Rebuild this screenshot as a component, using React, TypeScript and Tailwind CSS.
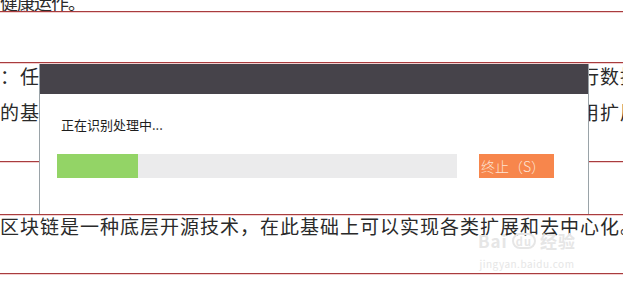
import React from 'react';

const font = { fontFamily: '"Noto Sans CJK SC", "Noto Sans", sans-serif' };

function RedLine() {
  return <div className="h-px bg-[#a83c3e] shadow-[0_1px_0_#f3d0d0]" />;
}

function Watermark() {
  return (
    <div className="absolute left-[478px] top-[232px] flex flex-col items-center text-[#e6e6e6] select-none">
      <div className="flex items-center gap-1 text-[17px] leading-[18px] font-bold tracking-[1px]">
        <span>Bai</span>
        <span className="rounded-full border-2 border-[#e6e6e6] px-[2px] text-[11px] leading-[12px]">du</span>
        <span>经验</span>
      </div>
      <div className="text-[10px] leading-[12px] mt-[8px] tracking-[0.5px]">jingyan.baidu.com</div>
    </div>
  );
}

function ProgressDialog({ progress }: { progress: number }) {
  return (
    <div className="absolute left-[39px] top-[64px] w-[550px] h-[150px] bg-white border-x border-[#9aa3a8] flex flex-col">
      <div className="h-[30px] bg-[#46434a]" />
      <div className="pl-[21px] pt-[21px] text-[13px] leading-[20px] text-[#1e1e1e]">正在识别处理中...</div>
      <div className="flex items-center pl-[17px] mt-[19px]">
        <div className="w-[400px] h-[24px] bg-[#ebebec]">
          <div className="h-full bg-[#93d466]" style={{ width: `${progress}%` }} />
        </div>
        <button className="ml-[22px] w-[75px] h-[24px] bg-[#f7864c] text-[#fde3d3] text-[14px] leading-[24px] text-left pl-[2px] font-light">
          终止（S）
        </button>
      </div>
    </div>
  );
}

export default function App() {
  return (
    <div className="relative w-[623px] h-[285px] overflow-hidden bg-white text-[#2a2a2a]" style={font}>
      <div className="h-[11px] overflow-hidden flex items-end">
        <p className="text-[18px] leading-[20px] whitespace-nowrap -mb-[1px] tracking-[-1px]">健康运作。</p>
      </div>
      <RedLine />
      <div className="h-[50px]" />
      <RedLine />
      <div className="h-[98px] pt-[3px] flex flex-col gap-[16px] text-[19px] leading-[20px] tracking-[1px] whitespace-nowrap">
        <p>：任何一方都可以参与到区块链系统网络中来，并对链上的信息进行数据维护</p>
        <p>的基础上，每个参与者都能够独立地验证数据，从而支撑起各类应用扩展。</p>
      </div>
      <RedLine />
      <div className="h-[52px]" />
      <RedLine />
      <div className="h-[58px] pt-[1px] text-[19px] leading-[20px] tracking-[1px] whitespace-nowrap">
        <p>区块链是一种底层开源技术，在此基础上可以实现各类扩展和去中心化。</p>
      </div>
      <RedLine />
      <Watermark />
      <ProgressDialog progress={20.25} />
    </div>
  );
}
